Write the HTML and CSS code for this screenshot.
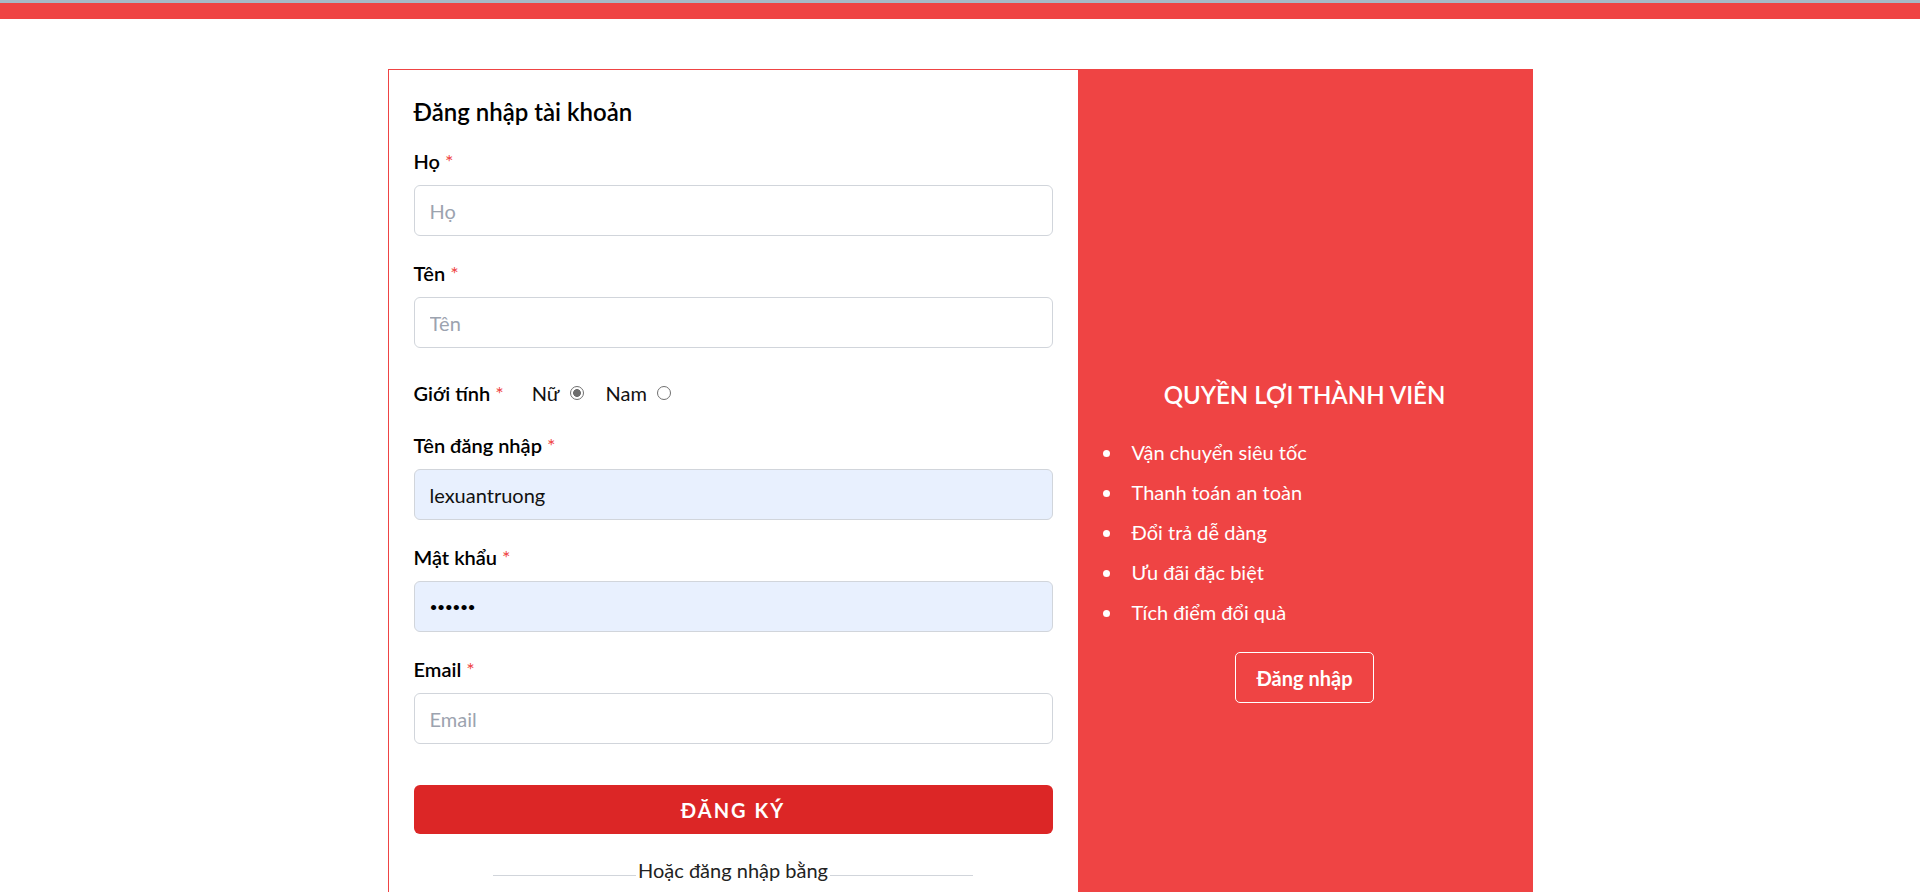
FILE: index.html
```html
<!DOCTYPE html>
<html lang="vi">
<head>
<meta charset="utf-8">
<title>Đăng ký tài khoản</title>
<link rel="stylesheet" href="styles.css">
</head>
<body>
<div class="topline"></div>
<header class="topbar"></header>
<main class="page">
  <div class="card">
    <section class="form-col">
      <h2 class="title">Đăng nhập tài khoản</h2>

      <div class="field">
        <label class="label">Họ <span class="req">*</span></label>
        <input class="input" type="text" placeholder="Họ">
      </div>

      <div class="field">
        <label class="label">Tên <span class="req">*</span></label>
        <input class="input" type="text" placeholder="Tên">
      </div>

      <div class="gender">
        <span class="label">Giới tính <span class="req">*</span></span>
        <label class="opt">Nữ <input class="radio" type="radio" name="gt" checked></label>
        <label class="opt">Nam <input class="radio" type="radio" name="gt"></label>
      </div>

      <div class="field">
        <label class="label">Tên đăng nhập <span class="req">*</span></label>
        <input class="input filled" type="text" value="lexuantruong">
      </div>

      <div class="field">
        <label class="label">Mật khẩu <span class="req">*</span></label>
        <input class="input filled pw" type="password" value="123456">
      </div>

      <div class="field">
        <label class="label">Email <span class="req">*</span></label>
        <input class="input" type="email" placeholder="Email">
      </div>

      <button class="submit" type="button">ĐĂNG KÝ</button>

      <div class="divider">
        <span class="line"></span>
        <span class="divider-text">Hoặc đăng nhập bằng</span>
        <span class="line"></span>
      </div>
    </section>

    <aside class="benefits">
      <h3 class="benefits-title">QUYỀN LỢI THÀNH VIÊN</h3>
      <ul class="benefits-list">
        <li>Vận chuyển siêu tốc</li>
        <li>Thanh toán an toàn</li>
        <li>Đổi trả dễ dàng</li>
        <li>Ưu đãi đặc biệt</li>
        <li>Tích điểm đổi quà</li>
      </ul>
      <button class="login-btn" type="button">Đăng nhập</button>
    </aside>
  </div>
</main>
</body>
</html>
```

FILE: styles.css
```css
* { box-sizing: border-box; }

html, body { margin: 0; padding: 0; }

body {
  font-family: "Lato", "Noto Sans", sans-serif;
  color: #111111;
  background: #ffffff;
}

.topline { height: 3px; background: #a7bac7; }

.topbar { height: 16px; background: #ef4444; }

.page { padding-top: 50px; }

.card {
  width: 1145px;
  margin: 0 auto;
  display: flex;
  border: 1px solid #ef4444;
}

.form-col {
  width: 689px;
  padding: 24px 25px 90px;
  background: #ffffff;
}

.title {
  margin: 0 0 16px;
  font-size: 24px;
  line-height: 36px;
  font-weight: 600;
  color: #000000;
}

.field { margin-bottom: 22px; }

.label {
  display: block;
  font-size: 20px;
  line-height: 30px;
  font-weight: 600;
  color: #000000;
  margin-bottom: 9px;
}

.req { color: #ef4444; font-weight: 400; }

.input {
  display: block;
  width: 100%;
  height: 51px;
  padding: 0 15px;
  border: 1px solid #d1d5db;
  border-radius: 6px;
  font-family: inherit;
  font-size: 20px;
  color: #111111;
  background: #ffffff;
  outline: none;
}

.input::placeholder { color: #9ca3af; }

.input.filled { background: #e8f0fe; }

.input.pw {
  font-size: 14px;
  letter-spacing: -0.5px;
  color: #000000;
}

.gender {
  display: flex;
  align-items: center;
  margin: 30px 0 22px;
  height: 30px;
}

.gender .label { margin: 0 28px 0 0; }

.opt {
  display: flex;
  align-items: center;
  font-size: 20px;
  line-height: 30px;
  color: #111111;
  margin-right: 22px;
}

.radio {
  appearance: none;
  -webkit-appearance: none;
  width: 14px;
  height: 14px;
  margin: 0 0 0 10px;
  border: 1px solid #707070;
  border-radius: 50%;
  background: #ffffff;
}

.radio:checked {
  background: radial-gradient(circle, #6e6e6e 0 3.6px, #ffffff 4.2px);
}

.submit {
  display: block;
  width: 100%;
  height: 49px;
  margin-top: 41px;
  border: none;
  border-radius: 6px;
  background: #dc2626;
  color: #ffffff;
  font-family: inherit;
  font-size: 20px;
  font-weight: 700;
  letter-spacing: 2px;
}

.divider {
  width: 75%;
  margin: 21px auto 0;
  display: flex;
  align-items: center;
}

.line {
  flex: 1;
  height: 1px;
  background: #d1d5db;
  margin-top: 10px;
}

.divider-text {
  padding: 0 2px;
  font-size: 20px;
  line-height: 30px;
  color: #222222;
}

.benefits {
  flex: 1;
  background: #ef4444;
  color: #ffffff;
  padding-top: 307px;
  display: flex;
  flex-direction: column;
  align-items: center;
}

.benefits-title {
  margin: 0 0 19px;
  font-size: 24px;
  line-height: 36px;
  font-weight: 600;
}

.benefits-list {
  align-self: stretch;
  list-style: none;
  margin: 0;
  padding: 0 0 0 54px;
}

.benefits-list li {
  position: relative;
  font-size: 20px;
  line-height: 40px;
}

.benefits-list li::before {
  content: "";
  position: absolute;
  left: -29px;
  top: 18px;
  width: 7px;
  height: 7px;
  border-radius: 50%;
  background: #ffffff;
}

.login-btn {
  margin-top: 20px;
  height: 51px;
  padding: 0 20px;
  border: 1px solid #ffffff;
  border-radius: 5px;
  background: transparent;
  color: #ffffff;
  font-family: inherit;
  font-size: 20px;
  font-weight: 700;
}
```
